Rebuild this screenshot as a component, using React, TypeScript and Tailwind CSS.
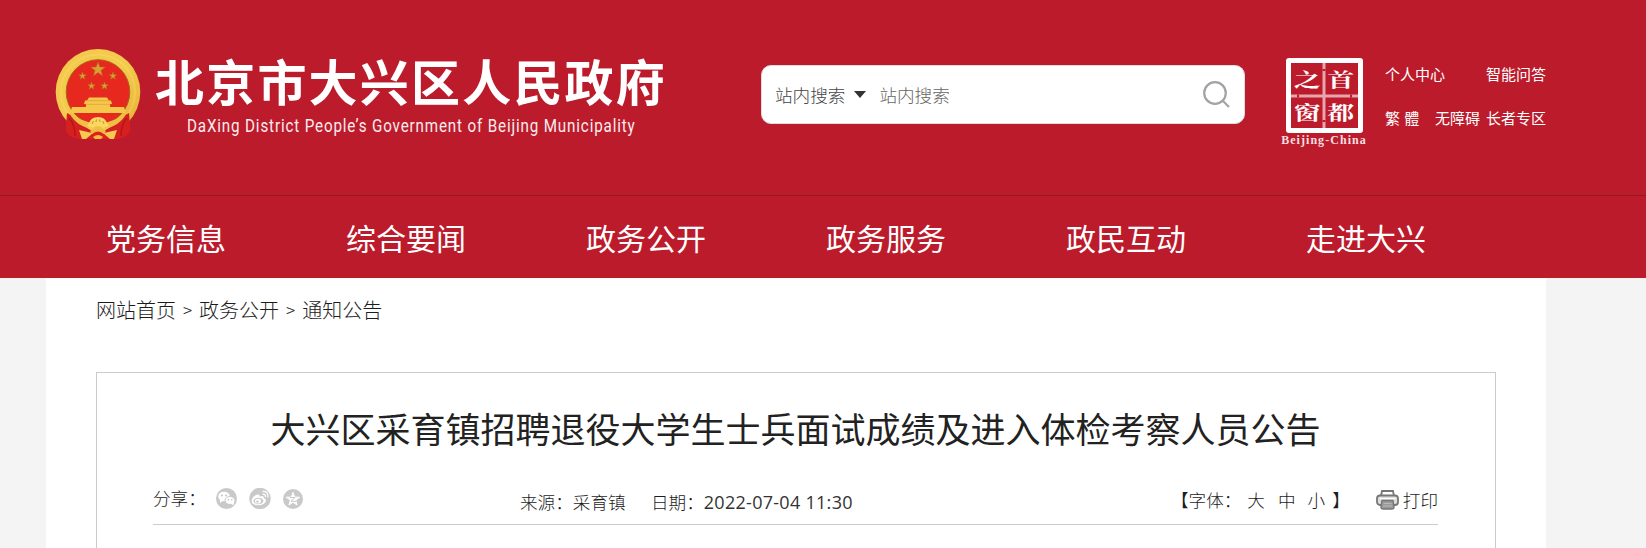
const navItems = ["党务信息", "综合要闻", "政务公开", "政务服务", "政民互动", "走进大兴"];

const star = (cx: number, cy: number, r: number) =>
  Array.from({ length: 10 }, (_, i) => {
    const a = (Math.PI / 5) * i - Math.PI / 2;
    const d = i % 2 ? r * 0.4 : r;
    return `${cx + d * Math.cos(a)},${cy + d * Math.sin(a)}`;
  }).join(" ");

function Emblem() {
  return (
    <svg className="h-[92px] w-[86px] shrink-0" viewBox="0 0 86 92">
      <defs>
        <linearGradient id="gold" x1="0" y1="0" x2="1" y2="1">
          <stop offset="0" stopColor="#f3c94a" />
          <stop offset="0.5" stopColor="#f3cb4c" />
          <stop offset="1" stopColor="#e5b035" />
        </linearGradient>
      </defs>
      {/* wreath and disc */}
      <ellipse cx="43" cy="43" rx="42.3" ry="43" fill="url(#gold)" />
      <ellipse cx="43" cy="43" rx="37" ry="37.5" fill="none" stroke="#fbe07a" strokeWidth="2" strokeOpacity="0.3" />
      <ellipse cx="43" cy="43" rx="31.8" ry="32.3" fill="#e6281f" stroke="#a9641d" strokeWidth="1" />
      <g fill="#d9a036" stroke="#b5701c" strokeWidth="0.5">
        <polygon points={star(43, 20.5, 7.6)} />
        <polygon points={star(27.5, 27, 4)} />
        <polygon points={star(58, 27, 4)} />
        <polygon points={star(36.5, 37, 4)} />
        <polygon points={star(49.5, 37, 4)} />
      </g>
      {/* gate tower */}
      <path d="M34 48.5H52L54 51.5H32ZM30 51.5H56L57 55H29ZM31 55H55V59H31ZM17 58H69L71 64H15Z" fill="#f5c84c" />
      <path d="M30 51.7H56M30 55.3H56" stroke="#d9922b" strokeWidth="0.6" />
      {/* ribbons */}
      <path d="M12 64Q17 66 27 76L37 82V89Q24 92 17 88Q9 84 11 76Z" fill="#d6201f" />
      <path d="M74 64Q69 66 59 76L49 82V89Q62 92 69 88Q77 84 75 76Z" fill="#d6201f" />
      <path d="M14 69Q20 75 20 87M72 69Q66 75 66 87" stroke="#b0161b" strokeWidth="1.4" fill="none" />
      <path d="M36 84Q43 79 50 84L55 89Q43 92 31 89Z" fill="#dd211d" />
      {/* wreath foot and gear */}
      <path d="M14 60Q17 67 27 71L36 74L33 79Q22 76 16 67ZM72 60Q69 67 59 71L50 74L53 79Q64 76 70 67Z" fill="#efc044" />
      <path d="M34 74Q36 68 43 68T52 74L54 77L48 79Q43 75 38 79L32 77Z" fill="#f9d762" />
      <path d="M37 75L38.5 72M41 73L41.5 70.5M45 73L44.5 70.5M49 75L47.5 72" stroke="#d08f2b" strokeWidth="1" />
      <path d="M24 81L35 83.5L38 84L31 90H27ZM62 81L51 83.5L48 84L55 90H59Z" fill="#f4ca50" />
      <path d="M35 82Q43 76 51 82L49 85Q43 80 37 85Z" fill="#efbd43" />
      <path d="M38 88Q43 84 48 88L46 90H40Z" fill="#efbd43" />
    </svg>
  );
}

function CapitalWindow() {
  return (
    <div className="flex w-[86px] flex-col items-center text-white">
      <div className="relative grid h-[75px] w-[77px] grid-cols-2 grid-rows-2 rounded-[3px] border-[5px] border-white font-['Noto_Serif_CJK_SC','Noto_Sans_CJK_SC',serif] text-[27px] leading-[32px] font-bold">
        <div className="absolute inset-y-0 left-1/2 w-[3px] -translate-x-1/2 bg-[#e8a5ac]" />
        <div className="absolute inset-x-0 top-1/2 h-[3px] -translate-y-1/2 bg-[#e8a5ac]" />
        <div className="absolute top-1/2 left-[6px] h-[3px] w-[2px] -translate-y-1/2 bg-[#bc1b2c]" />
        <div className="absolute top-1/2 right-[6px] h-[3px] w-[2px] -translate-y-1/2 bg-[#bc1b2c]" />
        <div className="absolute top-[6px] left-1/2 h-[2px] w-[3px] -translate-x-1/2 bg-[#bc1b2c]" />
        <div className="absolute bottom-[6px] left-1/2 h-[2px] w-[3px] -translate-x-1/2 bg-[#bc1b2c]" />
        {["之", "首", "窗", "都"].map((char) => (
          <span key={char} className="flex scale-y-[0.72] items-center justify-center">
            {char}
          </span>
        ))}
      </div>
      <span className="mt-[1px] font-['Liberation_Serif',serif] text-[12px] leading-[13px] font-bold tracking-[1.05px] whitespace-nowrap text-[#f7dfe1]">
        Beijing-China
      </span>
    </div>
  );
}

function WechatIcon() {
  return (
    <svg className="h-[21px] w-[21px]" viewBox="0 0 21 21">
      <circle cx="10.5" cy="10.5" r="10.5" fill="#c9c9c9" />
      <ellipse cx="8" cy="8.5" rx="5.8" ry="4.8" fill="#fff" />
      <path d="M4 11L4 15L8 12Z" fill="#fff" />
      <ellipse cx="14" cy="12.5" rx="5" ry="4" fill="#fff" stroke="#c9c9c9" />
      <path d="M15 15L17.5 17.8L18 14Z" fill="#fff" />
      <g fill="#bdbdbd">
        <circle cx="6" cy="7.5" r="0.9" />
        <circle cx="10" cy="7.5" r="0.9" />
        <circle cx="12.5" cy="11.8" r="0.8" />
        <circle cx="15.8" cy="11.8" r="0.8" />
      </g>
    </svg>
  );
}

function WeiboIcon() {
  return (
    <svg className="h-[21px] w-[22px]" viewBox="0 0 22 21">
      <circle cx="11" cy="10.5" r="10.7" fill="#c9c9c9" />
      <path d="M2.5 13Q3.5 8 8.5 6.5Q11 6 10.5 8.5Q15 7 14.8 10Q18 11 16.5 14Q14 17.5 9 17.3Q3 17 2.5 13Z" fill="#fff" />
      <ellipse cx="9.4" cy="13" rx="5" ry="3.3" fill="#c9c9c9" />
      <ellipse cx="9" cy="13.2" rx="3" ry="2.4" fill="#fff" />
      <circle cx="8.4" cy="13.6" r="1.2" fill="#c9c9c9" />
      <path d="M13.5 3.5Q19.5 3 19 9.5M13.7 6.3Q17 6 16.4 9.2" fill="none" stroke="#fff" strokeWidth="1.3" />
    </svg>
  );
}

function QzoneIcon() {
  return (
    <svg className="h-[20px] w-[20px]" viewBox="0 0 20 20">
      <circle cx="10" cy="10" r="10" fill="#c9c9c9" />
      <polygon points={star(10, 10.4, 7)} fill="#fff" stroke="#fff" strokeWidth="1" strokeLinejoin="round" />
      <path d="M7 8.5H12L8 12.3H13" fill="none" stroke="#c9c9c9" strokeWidth="1" />
    </svg>
  );
}

function PrinterIcon() {
  return (
    <svg className="h-[20px] w-[23px]" viewBox="0 0 23 20">
      <path d="M5 6L6 1H17L18 6" fill="#fff" stroke="#777" strokeWidth="1.8" />
      <rect x="1" y="5.5" width="21" height="9.5" rx="3" fill="#ddd" stroke="#777" strokeWidth="1.8" />
      <path d="M3.5 8.5H19.5" stroke="#fff" strokeWidth="1.2" />
      <path d="M6 10.5H17L18 17Q18 19 16 19H7Q5 19 5 17Z" fill="#999" stroke="#777" strokeWidth="1.4" />
      <path d="M7.5 13.5H15.5M7.2 16H15.8" stroke="#b8b8b8" strokeWidth="1" />
    </svg>
  );
}

export default function App() {
  return (
    <div className="h-[548px] w-[1646px] overflow-hidden bg-[#f4f4f4] font-['Noto_Sans_CJK_SC',sans-serif] text-[#1c1c1c]">
      <header className="h-[278px] bg-[#bc1b2c] text-white">
        <div className="flex h-[195px] items-start pl-[55px]">
          <div className="mt-[49px] flex items-start">
            <Emblem />
            <div className="ml-[14px] w-[520px]">
              <h1 className="mt-[5px] text-[49px] leading-[52px] font-bold tracking-[2.2px] whitespace-nowrap">
                北京市大兴区人民政府
              </h1>
              <p className="mt-[8px] ml-[32px] origin-left scale-x-[0.844] font-[Roboto,sans-serif] text-[18px] leading-[24px] tracking-[1px] whitespace-nowrap text-[#fbecee]">
                DaXing District People’s Government of Beijing Municipality
              </p>
            </div>
          </div>

          <div className="mt-[65px] ml-[86px] flex h-[59px] w-[484px] items-center rounded-[10px] border border-[#ddd] bg-white pr-[14px] pl-[13px] text-[17.6px] font-light">
            <span className="mt-[2px] text-[#444]">站内搜索</span>
            <svg className="ml-[9px] h-[7px] w-[12px]" viewBox="0 0 12 7">
              <path d="M0 0H12L6 7Z" fill="#333" />
            </svg>
            <span className="mt-[2px] ml-[13px] text-[#656565]">站内搜索</span>
            <svg className="ml-auto h-[27px] w-[27px]" viewBox="0 0 27 27" fill="none" stroke="#a3a3a3" strokeWidth="2.2">
              <circle cx="12" cy="12" r="10.8" />
              <path d="M19.5 19.5L26 26" />
            </svg>
          </div>

          <div className="mt-[58px] ml-[36px]">
            <CapitalWindow />
          </div>

          <div className="mt-[63px] ml-[18px] w-[161px] text-[15px] leading-[22px]">
            <div className="flex justify-between">
              <a href="#">个人中心</a>
              <a href="#">智能问答</a>
            </div>
            <div className="mt-[22px] flex">
              <a href="#" className="w-[35px] tracking-[0.5px] whitespace-nowrap">繁 體</a>
              <a href="#" className="ml-[15px]">无障碍</a>
              <a href="#" className="ml-[6px]">长者专区</a>
            </div>
          </div>
        </div>

        <nav className="flex h-[83px] border-t border-[#921a24] pl-[46px]">
          {navItems.map((item) => (
            <a key={item} href="#" className="w-60 text-center text-[30px] leading-[82px]">
              {item}
            </a>
          ))}
        </nav>
      </header>

      <main className="ml-[46px] h-[270px] w-[1500px] bg-white px-[50px]">
        <div className="flex h-[94px] gap-[7px] pt-[17px] text-[20px] leading-[30px] font-light">
          <a href="#">网站首页</a>
          <span className="text-[17px]">&gt;</span>
          <a href="#">政务公开</a>
          <span className="text-[17px]">&gt;</span>
          <a href="#">通知公告</a>
        </div>

        <article className="h-[200px] border border-[#ccc] pr-[57px] pl-[56px]">
          <h2 className="mt-[30px] text-center text-[35px] leading-[50px] whitespace-nowrap text-[#222]">
            大兴区采育镇招聘退役大学生士兵面试成绩及进入体检考察人员公告
          </h2>
          <div className="mt-[29px] flex h-[43px] items-start border-b border-[#ccc] text-[17.6px] leading-[26px] font-light whitespace-nowrap">
            <span className="mt-[3px] w-[63px]">分享：</span>
            <div className="mt-[6px] flex items-center gap-[12px]">
              <WechatIcon />
              <WeiboIcon />
              <QzoneIcon />
            </div>
            <span className="mt-[7px] ml-[217px] w-[131px]">来源：采育镇</span>
            <span className="mt-[7px]">
              日期：
              <span className="font-['Open_Sans',sans-serif] text-[18px] font-normal tracking-[0.28px] text-[#333]">2022-07-04 11:30</span>
            </span>
            <div className="mt-[5px] ml-auto flex">
              <span>【字体：</span>
              <a href="#" className="ml-[6px]">大</a>
              <a href="#" className="ml-[13px]">中</a>
              <a href="#" className="ml-[12px]">小</a>
              <span className="ml-[7px]">】</span>
            </div>
            <a href="#" className="mt-[5px] ml-[26px] flex items-center gap-[4px]">
              <PrinterIcon />
              打印
            </a>
          </div>
        </article>
      </main>
    </div>
  );
}
